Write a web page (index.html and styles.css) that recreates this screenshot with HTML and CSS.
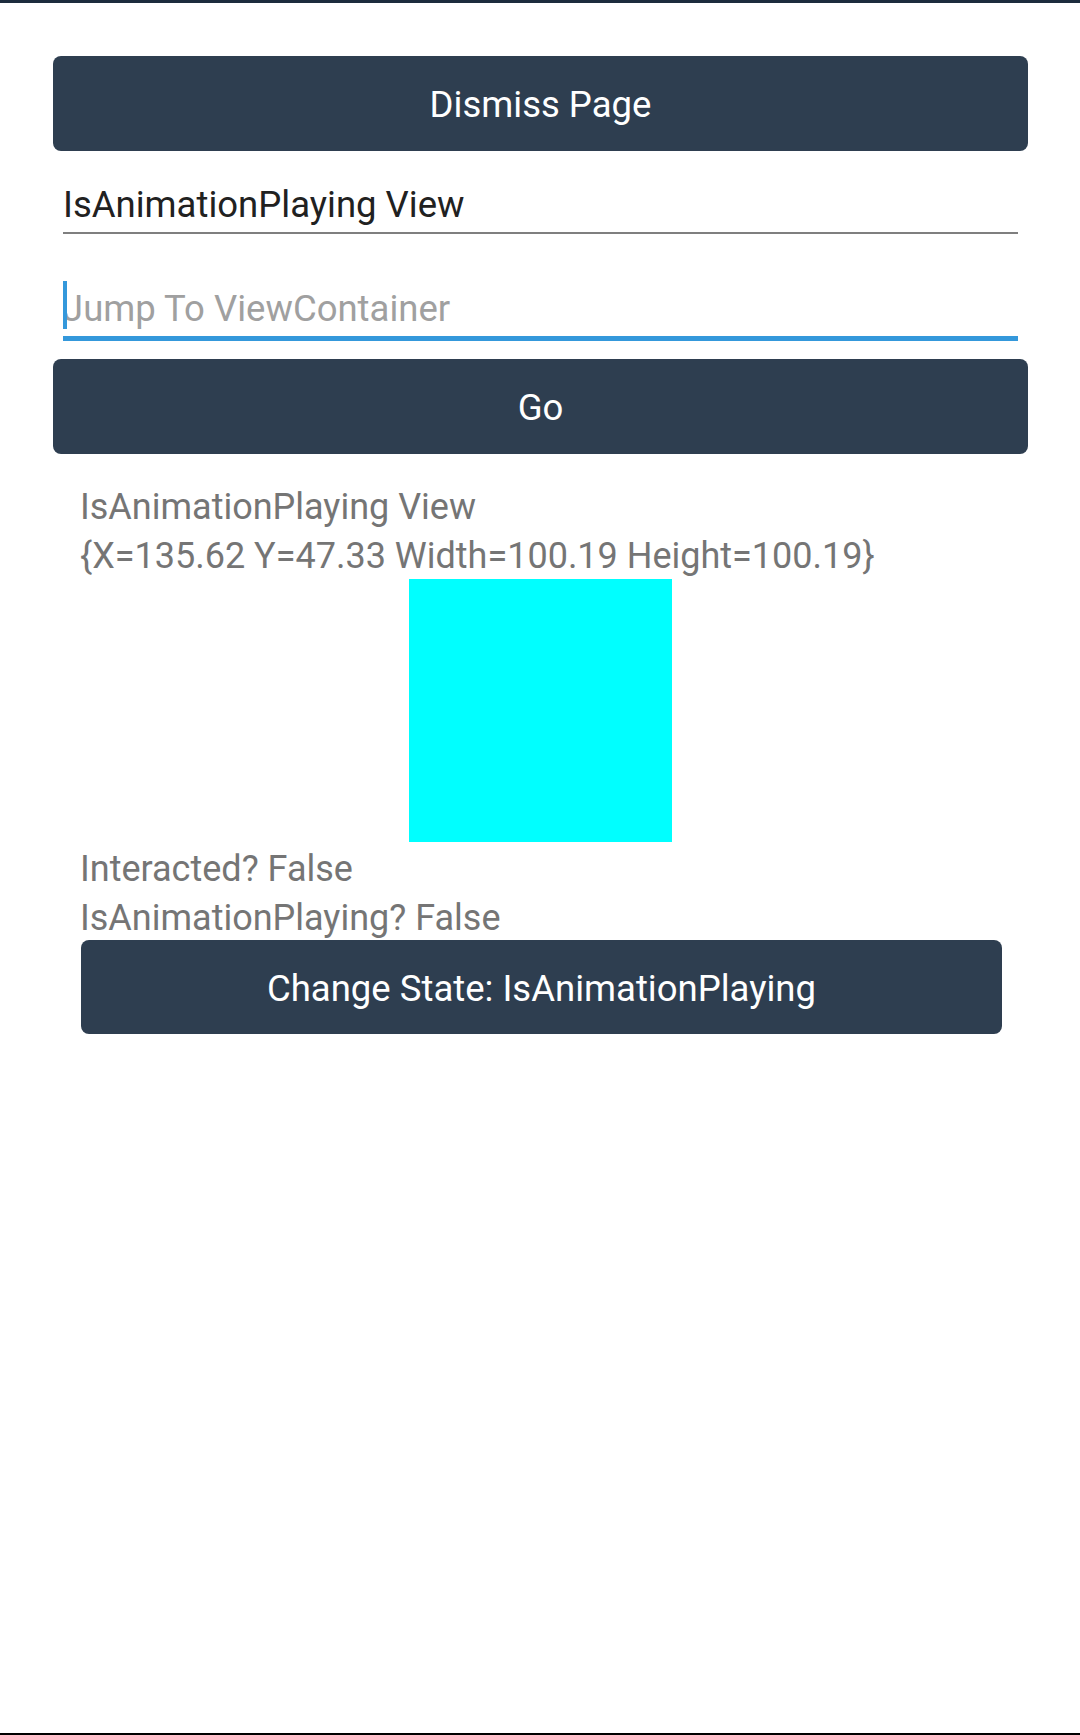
FILE: index.html
```html
<!DOCTYPE html>
<html lang="en">
<head>
<meta charset="utf-8">
<title>IsAnimationPlaying View</title>
<link rel="stylesheet" href="styles.css">
</head>
<body>
<div class="topbar"></div>
<main class="page">
  <button class="btn">Dismiss Page</button>
  <div class="entry entry-filled"><span class="entry-text">IsAnimationPlaying View</span></div>
  <div class="entry entry-focused"><span class="caret"></span><span class="placeholder">Jump To ViewContainer</span></div>
  <button class="btn btn-go">Go</button>
  <section class="demo">
    <p class="label">IsAnimationPlaying View<br>{X=135.62 Y=47.33 Width=100.19 Height=100.19}</p>
    <div class="box"></div>
    <p class="label label-state">Interacted? False<br>IsAnimationPlaying? False</p>
    <button class="btn btn-state">Change State: IsAnimationPlaying</button>
  </section>
</main>
<div class="bottombar"></div>
</body>
</html>
```
FILE: styles.css
```css
html, body {
  margin: 0;
  padding: 0;
}

body {
  height: 1735px;
  display: flex;
  flex-direction: column;
  background: #ffffff;
  font-family: Roboto, "Noto Sans", "Liberation Sans", sans-serif;
  overflow: hidden;
}

.topbar {
  height: 3px;
  background: #1d2c3d;
  flex: none;
}

.page {
  flex: 1;
  display: flex;
  flex-direction: column;
  padding: 53px 52px 0 53px;
}

.btn {
  display: flex;
  align-items: center;
  justify-content: center;
  box-sizing: border-box;
  height: 95px;
  width: 100%;
  margin: 0;
  padding: 3px 0 0 0;
  border: none;
  border-radius: 8px;
  background: #2e3e50;
  color: #ffffff;
  font-family: inherit;
  font-size: 36.5px;
  line-height: 42px;
}

.btn-go {
  margin-top: 18px;
}

.entry {
  position: relative;
  margin: 0 10px 0 10px;
  font-size: 36.5px;
  line-height: 41px;
  padding-bottom: 7px;
}

.entry-filled {
  margin-top: 33px;
  border-bottom: 2px solid #7f7f7f;
  color: #212121;
}

.entry-focused {
  margin-top: 54px;
  border-bottom: 5px solid #3498db;
}

.placeholder {
  color: #a0a0a0;
}

.caret {
  position: absolute;
  left: 0;
  top: -7px;
  width: 4px;
  height: 48px;
  background: #3498db;
}

.demo {
  display: flex;
  flex-direction: column;
  margin: 29px 26px 0 28px;
}

.label {
  margin: 0 0 0 -1px;
  font-size: 36px;
  line-height: 49px;
  color: #757575;
}

.box {
  align-self: center;
  width: 263px;
  height: 263px;
  margin: -2px 2px 0 0;
  background: #00ffff;
}

.label-state {
  margin-top: 3px;
}

.btn-state {
  height: 94px;
  margin-top: -3px;
}

.bottombar {
  height: 2px;
  background: #000000;
  flex: none;
}
```
